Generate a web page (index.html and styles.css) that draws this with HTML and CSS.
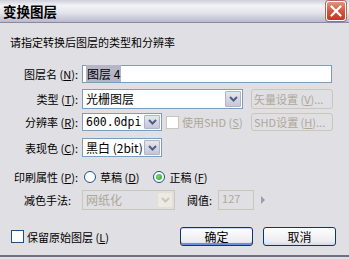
FILE: index.html
```html
<!DOCTYPE html>
<html lang="zh-CN">
<head>
    <meta charset="UTF-8">
    <title>变换图层</title>
    <link rel="stylesheet" href="styles.css">
</head>
<body>
<div class="window">
    <div class="titlebar">
        <span class="title">变换图层</span>
        <button class="close-btn">
            <svg width="12" height="12" viewBox="0 0 12 12"><path d="M1.5 1.5 L10.5 10.5 M10.5 1.5 L1.5 10.5" stroke="#fff" stroke-width="2.2" stroke-linecap="round"/></svg>
        </button>
    </div>

    <div class="content">
        <p class="intro">请指定转换后图层的类型和分辨率</p>

        <div class="form">
            <!-- layer name -->
            <div class="row row-name">
                <span class="label">图层名 (<u>N</u>):</span>
                <div class="textbox wide"><span class="selected">图层 4</span></div>
            </div>

            <!-- type -->
            <div class="row row-type">
                <span class="label">类型 (<u>T</u>):</span>
                <div class="select type-select">
                    <span class="select-text">光栅图层</span>
                    <span class="drop-btn"><svg width="9" height="6" viewBox="0 0 9 6"><path d="M1 1 L4.5 4.5 L8 1" stroke="#4d6185" stroke-width="2" fill="none"/></svg></span>
                </div>
                <button class="btn disabled side-btn">矢量设置 (<u>V</u>)...</button>
            </div>

            <!-- resolution -->
            <div class="row row-res">
                <span class="label">分辨率 (<u>R</u>):</span>
                <div class="select small-select">
                    <span class="select-text latin">600.0dpi</span>
                    <span class="drop-btn"><svg width="9" height="6" viewBox="0 0 9 6"><path d="M1 1 L4.5 4.5 L8 1" stroke="#4d6185" stroke-width="2" fill="none"/></svg></span>
                </div>
                <span class="checkbox disabled-box"></span>
                <span class="muted">使用SHD (<u>S</u>)</span>
                <button class="btn disabled side-btn">SHD设置 (<u>H</u>)...</button>
            </div>

            <!-- colour -->
            <div class="row row-color">
                <span class="label">表现色 (<u>C</u>):</span>
                <div class="select small-select">
                    <span class="select-text">黑白 (2bit)</span>
                    <span class="drop-btn"><svg width="9" height="6" viewBox="0 0 9 6"><path d="M1 1 L4.5 4.5 L8 1" stroke="#4d6185" stroke-width="2" fill="none"/></svg></span>
                </div>
            </div>

            <!-- print -->
            <div class="row row-print">
                <span class="label">印刷属性 (<u>P</u>):</span>
                <span class="radio"></span>
                <span class="radio-text">草稿 (<u>D</u>)</span>
                <span class="radio checked"></span>
                <span class="radio-text">正稿 (<u>F</u>)</span>
            </div>

            <!-- reduce -->
            <div class="row row-reduce">
                <span class="label label-reduce">减色手法:</span>
                <div class="select reduce-select off">
                    <span class="select-text">网纸化</span>
                    <span class="drop-btn"><svg width="9" height="6" viewBox="0 0 9 6"><path d="M1 1 L4.5 4.5 L8 1" stroke="#c9c7ba" stroke-width="2" fill="none"/></svg></span>
                </div>
                <span class="threshold-label">阈值:</span>
                <div class="textbox threshold off">127</div>
                <span class="arrow"></span>
            </div>
        </div>

        <div class="footer">
            <span class="checkbox"></span>
            <span class="keep-text">保留原始图层 (<u>L</u>)</span>
            <button class="btn ok-btn">确定</button>
            <button class="btn cancel-btn">取消</button>
        </div>
    </div>
</div>
</body>
</html>
```

FILE: styles.css
```css
* {
    box-sizing: border-box;
    font-family: "Noto Sans CJK SC", "Liberation Sans", sans-serif;
}

body {
    margin: 0;
    background-color: #e0dfe3;
}

.window {
    width: 349px;
    height: 259px;
    background-color: #e0dfe3;
    position: relative;
}

.window::after {
    content: "";
    position: absolute;
    left: 0;
    right: 0;
    bottom: 2px;
    height: 2px;
    background-color: #6f6f85;
}

.titlebar {
    height: 23px;
    display: flex;
    align-items: center;
    padding-left: 3px;
    background: linear-gradient(to bottom, #cfcfdc 0%, #f2f2f7 25%, #e2e2ea 60%, #b9b9cb 100%);
    border-bottom: 1px solid #8a8aa2;
}

.title {
    font-size: 13.5px;
    font-weight: bold;
    color: #000;
}

.close-btn {
    margin-left: auto;
    margin-right: 3px;
    width: 20px;
    height: 20px;
    padding: 0;
    border: 1px solid #fff;
    border-radius: 3px;
    background: linear-gradient(to bottom, #e8907c 0%, #d7553e 50%, #c13b24 100%);
    display: flex;
    align-items: center;
    justify-content: center;
    box-shadow: 0 0 0 1px #b06a5c;
}

.intro {
    margin: 0;
    padding: 11px 0 0 10px;
    height: 42px;
    font-size: 11px;
    color: #000;
}

.form {
    width: 333px;
}

.row {
    display: flex;
    align-items: center;
    font-size: 11px;
    color: #000;
}

.label {
    width: 80px;
    text-align: right;
    padding-right: 2px;
    white-space: nowrap;
}

.row-name {
    height: 18px;
}

.row-type {
    margin-top: 6px;
    height: 20px;
}

.row-res {
    margin-top: 4px;
    height: 18px;
}

.row-color {
    margin-top: 7px;
    height: 19px;
}

.row-print {
    margin-top: 13px;
    height: 13px;
}

.row-reduce {
    margin-top: 7px;
    height: 20px;
}

.textbox {
    height: 100%;
    background-color: #fff;
    border: 1px solid #7f9db9;
    padding: 0 3px;
    font-size: 12px;
    line-height: 15px;
    white-space: nowrap;
}

.wide {
    width: 250px;
    margin-left: 2px;
}

.selected {
    background-color: #b5b5c7;
    padding: 0 1px;
}

.select {
    height: 100%;
    display: flex;
    background-color: #fff;
    border: 1px solid #7f9db9;
    margin-left: 2px;
    padding: 1px;
}

.select-text {
    flex: 1;
    padding-left: 2px;
    font-size: 12px;
    line-height: 15px;
    white-space: nowrap;
    overflow: hidden;
}

.latin {
    font-family: "DejaVu Sans Mono", monospace;
    font-size: 11.5px;
}

.drop-btn {
    width: 16px;
    flex: none;
    display: flex;
    align-items: center;
    justify-content: center;
    background: linear-gradient(to bottom, #e6e6f0, #c6c6d8);
    border: 1px solid #b2b2c8;
    border-radius: 1px;
}

.type-select {
    width: 161px;
}

.small-select {
    width: 80px;
}

.reduce-select {
    width: 93px;
}

.select.off {
    border-color: #c9c7ba;
    background-color: #e0dfe3;
    color: #aca899;
}

.select.off .drop-btn {
    background: #eceae2;
    border-color: #e2e0d6;
}

.btn {
    font-size: 11px;
    background: linear-gradient(to bottom, #fefefe, #ecebf0 80%, #d8d7e0);
    border: 1px solid #3c4f70;
    border-radius: 3px;
    padding: 0;
    color: #000;
    white-space: nowrap;
}

.btn.disabled {
    background: #e0dfe3;
    border-color: #c9c7ba;
    color: #aca899;
}

.side-btn {
    margin-left: auto;
    width: 82px;
    height: 20px;
    text-align: left;
    padding-left: 2px;
    overflow: hidden;
}

.row-res .side-btn {
    height: 18px;
}

.checkbox {
    width: 13px;
    height: 13px;
    border: 1px solid #1c5180;
    background-color: #fff;
    display: inline-block;
    flex: none;
}

.disabled-box {
    border-color: #c9c7ba;
    margin-left: 4px;
}

.muted {
    color: #aca899;
    margin-left: 3px;
}

.radio {
    width: 12px;
    height: 12px;
    border-radius: 50%;
    border: 1px solid #1c5180;
    background-color: #fff;
    margin-left: 4px;
    position: relative;
}

.radio.checked {
    margin-left: 14px;
}

.radio.checked::after {
    content: "";
    position: absolute;
    left: 2px;
    top: 2px;
    width: 6px;
    height: 6px;
    border-radius: 50%;
    background: radial-gradient(circle at 40% 40%, #7cd96a, #21a121);
}

.radio-text {
    margin-left: 4px;
}

.label-reduce {
    padding-right: 9px;
}

.threshold-label {
    margin-left: 12px;
}

.threshold {
    width: 36px;
    margin-left: 6px;
    border-color: #c9c7ba;
    background-color: #e0dfe3;
    color: #aca899;
    font-size: 11px;
}

.arrow {
    margin-left: 7px;
    width: 0;
    height: 0;
    border-top: 4px solid transparent;
    border-bottom: 4px solid transparent;
    border-left: 4px solid #9c9cac;
}

.footer {
    display: flex;
    align-items: center;
    width: 336px;
    margin-top: 17px;
    padding-left: 11px;
    font-size: 11px;
}

.keep-text {
    margin-left: 3px;
}

.ok-btn {
    margin-left: auto;
    width: 73px;
    height: 19px;
    font-size: 12px;
    border-color: #003c74;
    box-shadow: inset 0 -2px 0 #6b8fe0, inset 0 1px 0 #c9d9f8;
}

.cancel-btn {
    margin-left: 10px;
    width: 73px;
    height: 19px;
    font-size: 12px;
    border-color: #003c74;
}
```
